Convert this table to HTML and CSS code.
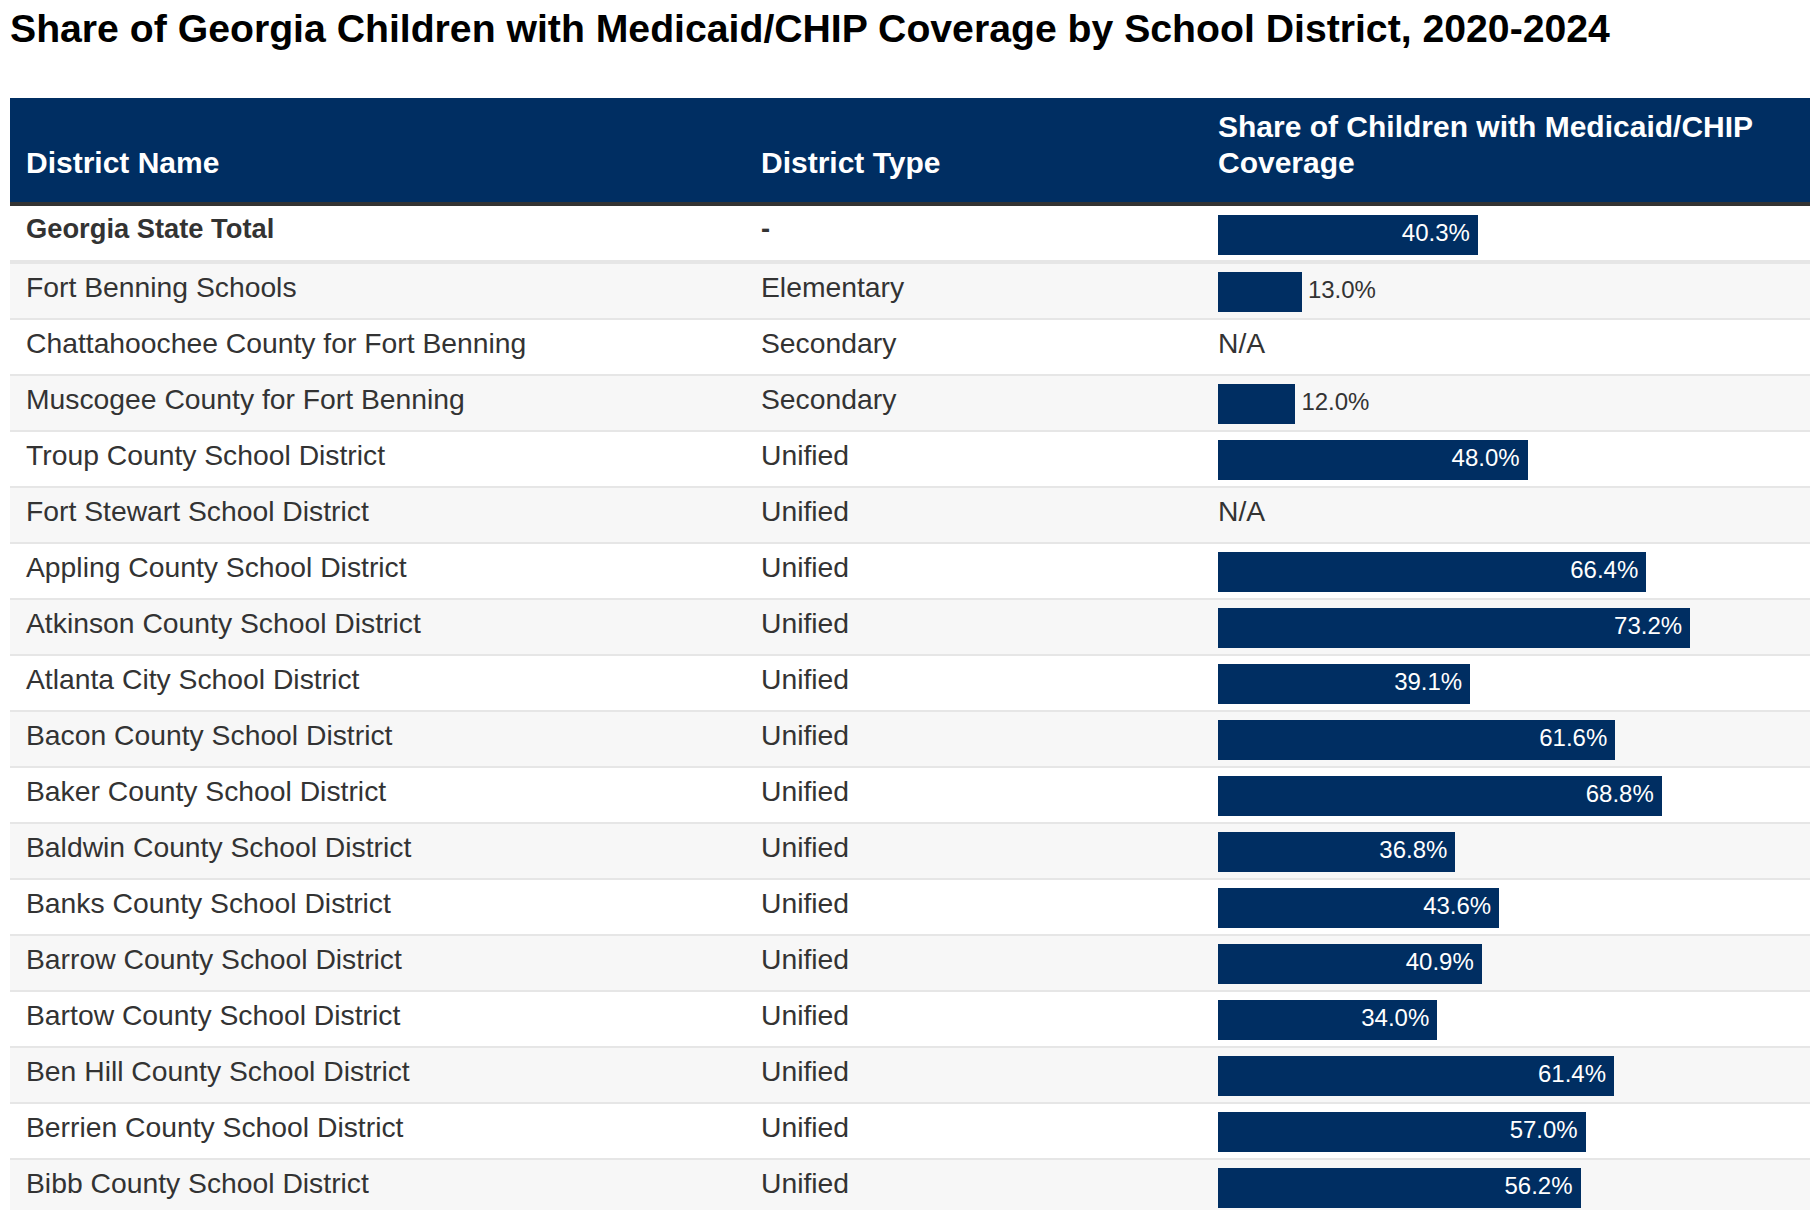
FILE: index.html
```html
<!DOCTYPE html>
<html lang="en">
<head>
<meta charset="utf-8">
<title>Share of Georgia Children with Medicaid/CHIP Coverage by School District, 2020-2024</title>
<link rel="stylesheet" href="styles.css">
</head>
<body>
<h1 class="title">Share of Georgia Children with Medicaid/CHIP Coverage by School District, 2020-2024</h1>
<div class="table-wrap">
<table class="data">
  <colgroup>
    <col class="c-name">
    <col class="c-type">
    <col class="c-cov">
  </colgroup>
  <thead>
    <tr>
      <th>District Name</th>
      <th>District Type</th>
      <th>Share of Children with Medicaid/CHIP Coverage</th>
    </tr>
  </thead>
  <tbody>
    <tr class="total">
      <td>Georgia State Total</td><td>-</td>
      <td class="cov"><div class="track"><div class="bar" style="width:259.9px"><span class="lbl">40.3%</span></div></div></td>
    </tr>
    <tr>
      <td>Fort Benning Schools</td><td>Elementary</td>
      <td class="cov"><div class="track"><div class="bar" style="width:83.9px"></div><span class="lbl out">13.0%</span></div></td>
    </tr>
    <tr>
      <td>Chattahoochee County for Fort Benning</td><td>Secondary</td>
      <td class="cov"><div class="track na">N/A</div></td>
    </tr>
    <tr>
      <td>Muscogee County for Fort Benning</td><td>Secondary</td>
      <td class="cov"><div class="track"><div class="bar" style="width:77.4px"></div><span class="lbl out">12.0%</span></div></td>
    </tr>
    <tr>
      <td>Troup County School District</td><td>Unified</td>
      <td class="cov"><div class="track"><div class="bar" style="width:309.6px"><span class="lbl">48.0%</span></div></div></td>
    </tr>
    <tr>
      <td>Fort Stewart School District</td><td>Unified</td>
      <td class="cov"><div class="track na">N/A</div></td>
    </tr>
    <tr>
      <td>Appling County School District</td><td>Unified</td>
      <td class="cov"><div class="track"><div class="bar" style="width:428.3px"><span class="lbl">66.4%</span></div></div></td>
    </tr>
    <tr>
      <td>Atkinson County School District</td><td>Unified</td>
      <td class="cov"><div class="track"><div class="bar" style="width:472.1px"><span class="lbl">73.2%</span></div></div></td>
    </tr>
    <tr>
      <td>Atlanta City School District</td><td>Unified</td>
      <td class="cov"><div class="track"><div class="bar" style="width:252.2px"><span class="lbl">39.1%</span></div></div></td>
    </tr>
    <tr>
      <td>Bacon County School District</td><td>Unified</td>
      <td class="cov"><div class="track"><div class="bar" style="width:397.3px"><span class="lbl">61.6%</span></div></div></td>
    </tr>
    <tr>
      <td>Baker County School District</td><td>Unified</td>
      <td class="cov"><div class="track"><div class="bar" style="width:443.8px"><span class="lbl">68.8%</span></div></div></td>
    </tr>
    <tr>
      <td>Baldwin County School District</td><td>Unified</td>
      <td class="cov"><div class="track"><div class="bar" style="width:237.4px"><span class="lbl">36.8%</span></div></div></td>
    </tr>
    <tr>
      <td>Banks County School District</td><td>Unified</td>
      <td class="cov"><div class="track"><div class="bar" style="width:281.2px"><span class="lbl">43.6%</span></div></div></td>
    </tr>
    <tr>
      <td>Barrow County School District</td><td>Unified</td>
      <td class="cov"><div class="track"><div class="bar" style="width:263.8px"><span class="lbl">40.9%</span></div></div></td>
    </tr>
    <tr>
      <td>Bartow County School District</td><td>Unified</td>
      <td class="cov"><div class="track"><div class="bar" style="width:219.3px"><span class="lbl">34.0%</span></div></div></td>
    </tr>
    <tr>
      <td>Ben Hill County School District</td><td>Unified</td>
      <td class="cov"><div class="track"><div class="bar" style="width:396.0px"><span class="lbl">61.4%</span></div></div></td>
    </tr>
    <tr>
      <td>Berrien County School District</td><td>Unified</td>
      <td class="cov"><div class="track"><div class="bar" style="width:367.7px"><span class="lbl">57.0%</span></div></div></td>
    </tr>
    <tr>
      <td>Bibb County School District</td><td>Unified</td>
      <td class="cov"><div class="track"><div class="bar" style="width:362.5px"><span class="lbl">56.2%</span></div></div></td>
    </tr>
  </tbody>
</table>
</div>
</body>
</html>
```
FILE: styles.css
```css
html, body {
  margin: 0;
  background: #ffffff;
  overflow: hidden;
}
body {
  padding: 9px 10px 0;
  font-family: "Liberation Sans", Arial, Helvetica, sans-serif;
  color: #333333;
}
.title {
  margin: 0 0 50px;
  font-size: 39.2px;
  line-height: 1;
  font-weight: 700;
  color: #000000;
}
.table-wrap {
  width: 1800px;
  height: 1111.5px;
  overflow: hidden;
}
.data {
  width: 1800px;
  table-layout: fixed;
  border-collapse: collapse;
  border-spacing: 0;
}
.c-name { width: 735px; }
.c-type { width: 457px; }
.c-cov { width: 608px; }

.data th {
  background: #002e62;
  color: #ffffff;
  font-size: 30px;
  font-weight: 700;
  line-height: 36px;
  text-align: left;
  vertical-align: bottom;
  padding: 11px 16px 21px;
  border-bottom: 4px solid #333333;
}
.data td {
  font-size: 28.3px;
  line-height: normal;
  vertical-align: top;
  padding: 7px 16px 0;
  border-bottom: 2px solid #e6e6e6;
}
.data tbody tr:nth-child(even) td {
  background: #f7f7f7;
}
.data tbody tr:last-child td {
  border-bottom: none;
}
.data tr.total td {
  font-weight: 700;
  font-size: 27.3px;
  border-bottom: 4px solid #e6e6e6;
}
.data td.cov {
  padding: 7px 16px 5.3px;
}
.data tr.total td.cov {
  padding-bottom: 4.9px;
}
.track {
  display: flex;
  align-items: flex-start;
  height: 40px;
  margin-top: 1.7px;
}
.track.na {
  height: 41.7px;
  margin-top: 0;
  font-size: 28.3px;
  line-height: normal;
}
.bar {
  flex: none;
  height: 40px;
  background: #002e62;
  display: flex;
  justify-content: flex-end;
  align-items: flex-start;
  padding-right: 8px;
  box-sizing: border-box;
}
.lbl {
  font-size: 24px;
  font-weight: 400;
  line-height: 36px;
  color: #ffffff;
  white-space: nowrap;
}
.lbl.out {
  color: #333333;
  margin-left: 6px;
}
.data tr.total .lbl {
  font-size: 24px;
  font-weight: 400;
}
```
